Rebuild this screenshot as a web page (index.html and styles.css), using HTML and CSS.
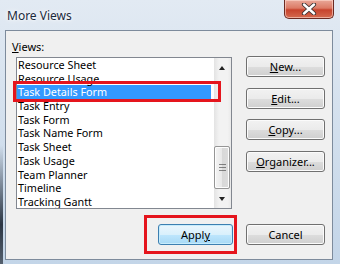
FILE: index.html
```html
<!DOCTYPE html>
<html lang="en">

<head>
  <meta charset="UTF-8">
  <meta name="viewport" content="width=device-width, initial-scale=1.0">
  <title>More Views</title>
  <link rel="stylesheet" href="styles.css">
</head>

<body>
  <div class="window">
    <div class="titlebar">
      <span class="title">More Views</span>
      <div class="close">
        <svg width="16" height="12" viewBox="0 0 16 12">
          <path d="M3 1.5 L13 10.5 M13 1.5 L3 10.5" stroke="#3a3030" stroke-width="4.2" stroke-linecap="round"/>
          <path d="M3 1.5 L13 10.5 M13 1.5 L3 10.5" stroke="#ffffff" stroke-width="2.4" stroke-linecap="round"/>
        </svg>
      </div>
    </div>

    <div class="client">
      <div class="main">
        <div class="left">
          <div class="label"><u>V</u>iews:</div>
          <div class="listbox">
            <ul class="items">
              <li class="item">Resource Sheet</li>
              <li class="item">Resource Usage</li>
              <li class="item selected">Task Details Form</li>
              <li class="item">Task Entry</li>
              <li class="item">Task Form</li>
              <li class="item">Task Name Form</li>
              <li class="item">Task Sheet</li>
              <li class="item">Task Usage</li>
              <li class="item">Team Planner</li>
              <li class="item">Timeline</li>
              <li class="item">Tracking Gantt</li>
            </ul>
            <div class="scrollbar">
              <div class="arrow up"></div>
              <div class="track">
                <div class="thumb"><span class="grip"></span></div>
              </div>
              <div class="arrow down"></div>
            </div>
            <div class="mark mark-item"></div>
          </div>
        </div>

        <div class="side">
          <button class="btn"><u>N</u>ew...</button>
          <button class="btn"><u>E</u>dit...</button>
          <button class="btn"><u>C</u>opy...</button>
          <button class="btn"><u>O</u>rganizer...</button>
        </div>
      </div>

      <div class="footer">
        <div class="apply-wrap">
          <button class="btn btn-default">Appl<u>y</u></button>
          <div class="mark mark-apply"></div>
        </div>
        <button class="btn btn-cancel">Cancel</button>
      </div>
    </div>
  </div>
</body>

</html>
```

FILE: styles.css
```css
* {
  margin: 0;
  padding: 0;
  box-sizing: border-box;
  list-style: none;
}

body {
  font-family: "Noto Sans", "Open Sans", sans-serif;
  font-size: 11px;
  color: #000;
}

.window {
  width: 340px;
  height: 264px;
  padding-left: 5px;
  background:
    linear-gradient(180deg, rgba(40, 50, 64, 0) 0%, rgba(40, 50, 64, 0) 55%, #2c3644 85%, #55606e 100%) left top / 3px 100% no-repeat,
    linear-gradient(180deg, #e2eaf3 0%, #d5e1ee 40%, #c3d5e8 100%);
}

.titlebar {
  display: flex;
  justify-content: space-between;
  align-items: flex-start;
  height: 30px;
  padding-right: 6px;
}

.title {
  padding: 7px 0 0 2px;
  font-size: 12px;
  color: #1a2a3c;
  text-shadow: 0 0 6px #fff, 0 0 3px #fff;
}

.close {
  width: 50px;
  height: 19px;
  border: 1px solid #6b2a22;
  border-top: none;
  border-radius: 0 0 5px 5px;
  background: linear-gradient(180deg, #e9a899 0%, #dc7a65 45%, #c7432d 55%, #d46a4f 100%);
  box-shadow: inset 0 0 0 1px rgba(255, 220, 210, .6);
  display: flex;
  align-items: center;
  justify-content: center;
}

.client {
  width: 328px;
  height: 230px;
  background: #f0f0f0;
  border: 1px solid #7d8b9c;
}

.main {
  display: flex;
  align-items: flex-start;
}

.label {
  margin: 8px 0 0 6px;
  height: 15px;
  line-height: 15px;
}

.listbox {
  position: relative;
  display: flex;
  margin: 3px 0 0 10px;
  width: 216px;
  height: 152px;
  border: 1px solid #828790;
  background: #fff;
}

.items {
  flex: 1;
  overflow: hidden;
  font-size: 10.8px;
}

.item {
  height: 13.7px;
  line-height: 13.7px;
  padding-left: 1px;
  margin-right: 3px;
  white-space: nowrap;
}

.selected {
  background: #3399ff;
  color: #fff;
}

.scrollbar {
  width: 17px;
  display: flex;
  flex-direction: column;
  background: linear-gradient(90deg, #e3e3e3, #f2f2f2 30%, #f2f2f2 80%, #e9e9e9);
}

.arrow {
  height: 17px;
  position: relative;
}

.arrow::after {
  content: "";
  position: absolute;
  left: 5px;
  width: 0;
  height: 0;
  border-left: 3.5px solid transparent;
  border-right: 3.5px solid transparent;
}

.up::after {
  top: 8px;
  border-bottom: 4px solid #222;
}

.down::after {
  top: 6px;
  border-top: 4px solid #222;
}

.track {
  flex: 1;
  padding-top: 71px;
}

.thumb {
  width: 16px;
  height: 43px;
  border: 1px solid #959595;
  border-radius: 2px;
  background: linear-gradient(90deg, #f4f4f4, #e8e8e8 50%, #d8d8d8 51%, #dcdcdc);
  box-shadow: inset 0 0 0 1px #fdfdfd;
  display: flex;
  align-items: center;
  justify-content: center;
}

.grip {
  width: 7px;
  height: 7px;
  background: repeating-linear-gradient(180deg, #555 0 1px, transparent 1px 3px);
  opacity: .7;
}

.mark {
  position: absolute;
  border: 3px solid #e5151d;
}

.mark-item {
  left: -4px;
  top: 23px;
  width: 208px;
  height: 21px;
}

.side {
  display: flex;
  flex-direction: column;
  gap: 10.6px;
  margin-left: 14px;
  padding-top: 25px;
}

.btn {
  font-family: inherit;
  font-size: 11px;
  color: #000;
  width: 79px;
  height: 21px;
  border: 1px solid #707070;
  border-radius: 3px;
  background: linear-gradient(180deg, #f2f2f2 0%, #ebebeb 50%, #dddddd 51%, #cfcfcf 100%);
  box-shadow: inset 0 0 0 1px #fbfbfb;
}

.footer {
  display: flex;
  justify-content: flex-end;
  gap: 13px;
  margin-top: 15px;
  padding-right: 7px;
}

.apply-wrap {
  position: relative;
}

.btn-default {
  width: 75px;
  border-color: #3c7fb1;
  background: linear-gradient(180deg, #eaf6fd 0%, #d9f0fc 50%, #bee6fd 51%, #a7d9f5 100%);
  box-shadow: inset 0 0 0 1px #c7ecfc;
}

.mark-apply {
  left: -14px;
  right: -4px;
  top: -9px;
  bottom: -9px;
}
```
